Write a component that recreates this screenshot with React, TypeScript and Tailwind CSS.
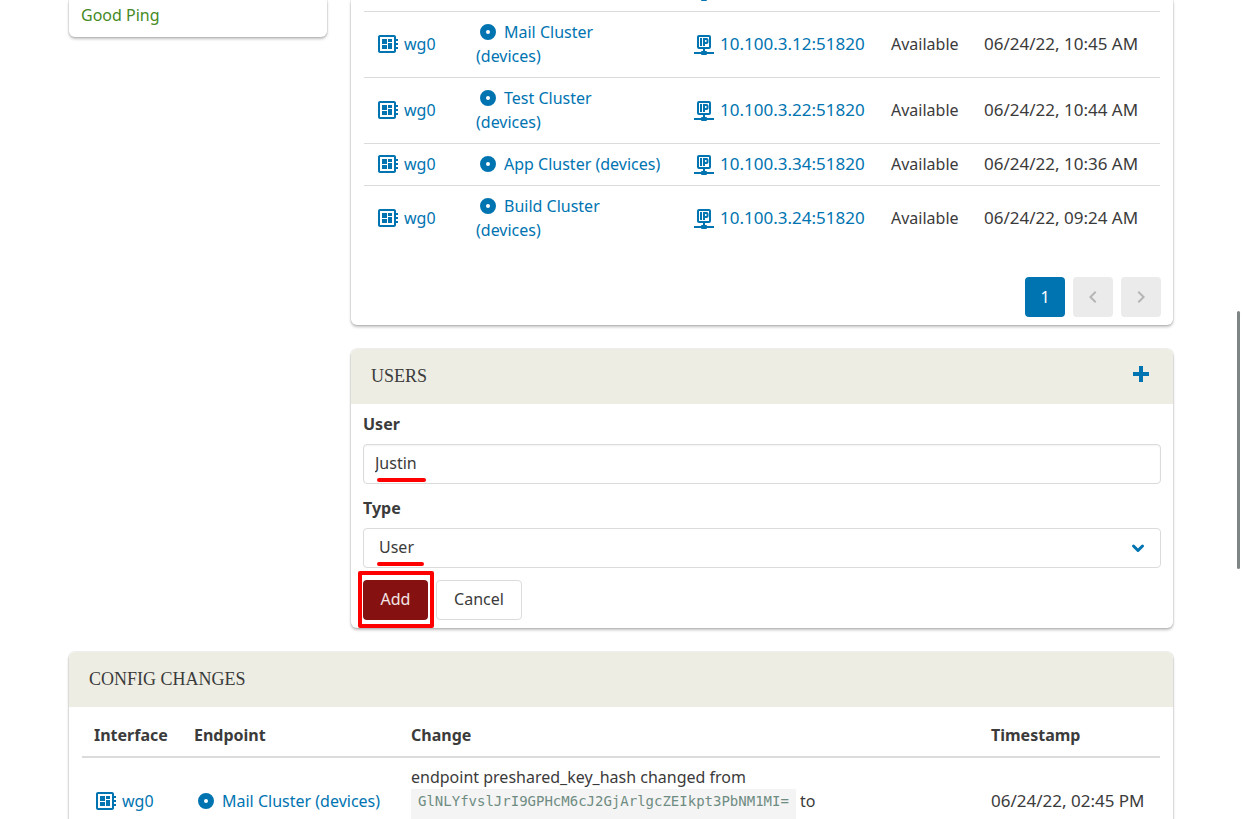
import React from "react";
import { MdDeveloperBoard, MdChevronLeft, MdChevronRight } from "react-icons/md";

const CARD =
  "bg-white shadow-[0_2px_3px_rgba(0,0,0,0.25),0_0_0_1px_rgba(0,0,0,0.06)]";
const LINK = "text-[#0074b1]";

type Peer = { cluster: string; address: string; time: string; stacked: boolean };

const peers: Peer[] = [
  { cluster: "Mail Cluster", address: "10.100.3.12:51820", time: "06/24/22, 10:45 AM", stacked: true },
  { cluster: "Test Cluster", address: "10.100.3.22:51820", time: "06/24/22, 10:44 AM", stacked: true },
  { cluster: "App Cluster", address: "10.100.3.34:51820", time: "06/24/22, 10:36 AM", stacked: false },
  { cluster: "Build Cluster", address: "10.100.3.24:51820", time: "06/24/22, 09:24 AM", stacked: true },
];

function IpIcon() {
  return (
    <svg viewBox="0 0 24 24" className="size-6 shrink-0" fill="currentColor" aria-hidden="true">
      <path d="M15 20a1 1 0 0 0-1-1h-1v-2h4a2 2 0 0 0 2-2V5a2 2 0 0 0-2-2H7a2 2 0 0 0-2 2v10a2 2 0 0 0 2 2h4v2h-1a1 1 0 0 0-1 1H2v2h7a1 1 0 0 0 1 1h4a1 1 0 0 0 1-1h7v-2h-7M7 15V5h10v10H7m1-9h2v8H8V6m6.500 0H11v8h2v-2h1.500c1.110 0 2-.89 2-2V8c0-1.110-.89-2-2-2m0 4H13V8h1.500v2z" />
    </svg>
  );
}

function InterfaceLink() {
  return (
    <a href="#interface" className={`flex items-center gap-1 ${LINK}`}>
      <MdDeveloperBoard className="size-6 shrink-0" aria-hidden="true" />
      <span>wg0</span>
    </a>
  );
}

function EndpointLink({ name, stacked = false }: { name: string; stacked?: boolean }) {
  return (
    <a href="#endpoint" className={LINK}>
      <svg viewBox="0 0 24 24" className="mr-1 inline-block size-6 align-top" fill="currentColor" aria-hidden="true">
        <path fillRule="evenodd" d="M12 4a8 8 0 1 0 0 16 8 8 0 0 0 0-16m0 6a2 2 0 1 1 0 4 2 2 0 0 1 0-4z" />
      </svg>
      <span className="whitespace-nowrap">{name}</span> {stacked && <br />}
      <span className="whitespace-nowrap">(devices)</span>
    </a>
  );
}

function CardHeader({ title, children }: { title: string; children?: React.ReactNode }) {
  return (
    <header className="flex items-start justify-between rounded-t-md bg-[#edede3] px-5 pt-[13px] pb-[14px]">
      <h2 className="font-['Liberation_Serif',serif] text-lg leading-7">{title}</h2>
      {children}
    </header>
  );
}

function PeersCard() {
  const cell = "px-3 pt-2 pb-[9px] align-middle";
  return (
    <section className={`${CARD} rounded-b-md pb-2`}>
      <div className="px-[13px]">
        <table className="w-full table-fixed border-collapse text-left">
          <colgroup>
            <col className="w-[100px]" />
            <col className="w-[216px]" />
            <col className="w-[199px]" />
            <col className="w-[93px]" />
            <col />
          </colgroup>
          <tbody>
            <tr>
              <td colSpan={2} />
              <td className="px-3 pb-[9px]">
                <span className={`flex h-0.5 items-end overflow-hidden ${LINK}`}>
                  <IpIcon />
                </span>
              </td>
              <td colSpan={2} />
            </tr>
            {peers.map((p) => (
              <tr key={p.address} className="border-t border-[#dbdbdb]">
                <td className={cell}>
                  <InterfaceLink />
                </td>
                <td className={cell}>
                  <EndpointLink name={p.cluster} stacked={p.stacked} />
                </td>
                <td className={cell}>
                  <a href="#address" className={`flex items-center gap-1 ${LINK}`}>
                    <IpIcon />
                    <span className="text-[17px]">{p.address}</span>
                  </a>
                </td>
                <td className={cell}>Available</td>
                <td className={`${cell} text-[17px] whitespace-nowrap`}>{p.time}</td>
              </tr>
            ))}
          </tbody>
        </table>
      </div>
      <nav aria-label="Pagination" className="mt-[26px] flex justify-end gap-2 px-3">
        <button type="button" className="size-10 rounded bg-[#0074b1] text-white">
          1
        </button>
        <button type="button" disabled aria-label="Previous page" className="flex size-10 items-center justify-center rounded bg-[#ebebeb] text-[#b5b5b5]">
          <MdChevronLeft className="size-6" />
        </button>
        <button type="button" disabled aria-label="Next page" className="flex size-10 items-center justify-center rounded bg-[#ebebeb] text-[#b5b5b5]">
          <MdChevronRight className="size-6" />
        </button>
      </nav>
    </section>
  );
}

function UsersCard() {
  return (
    <section className={`${CARD} rounded-md`}>
      <CardHeader title="USERS">
        <button type="button" aria-label="Add user" className={LINK}>
          <svg viewBox="0 0 24 24" className="size-6" fill="currentColor" aria-hidden="true">
            <path d="M20 14h-6v6h-4v-6H4v-4h6V4h4v6h6v4z" />
          </svg>
        </button>
      </CardHeader>
      <form className="px-3 py-2" onSubmit={(e) => e.preventDefault()}>
        <label htmlFor="user" className="mb-2 block font-bold">
          User
        </label>
        <div className="relative">
          <input
            id="user"
            type="text"
            defaultValue="Justin"
            className="block h-10 w-full rounded border border-[#dbdbdb] bg-white px-[11px] pb-0.5 shadow-[inset_0_1px_2px_rgba(0,0,0,0.05)]"
          />
          <span className="absolute bottom-[2px] left-[14px] h-1 w-[49px] rounded-full bg-[#ff0000]" />
        </div>
        <label htmlFor="type" className="mt-3 mb-2 block font-bold">
          Type
        </label>
        <div className="relative">
          <select
            id="type"
            defaultValue="User"
            className="block h-10 w-full appearance-none rounded border border-[#dbdbdb] bg-white px-[15px] pb-0.5"
          >
            <option>User</option>
          </select>
          <svg viewBox="0 0 14 10" className="pointer-events-none absolute top-[15px] right-4 h-[10px] w-[14px] text-[#0074b1]" fill="none" stroke="currentColor" strokeWidth="3" strokeLinecap="round" strokeLinejoin="round" aria-hidden="true">
            <path d="M2.500 3 7 7.500 11.500 3" />
          </svg>
          <span className="absolute bottom-[2px] left-[14px] h-1 w-[47px] rounded-full bg-[#ff0000]" />
        </div>
        <div className="mt-3 flex gap-2">
          <div className="relative">
            <button type="submit" className="block h-10 w-[65px] rounded bg-[#851111] pb-0.5 text-white/90">
              Add
            </button>
            <span className="pointer-events-none absolute -top-[9px] -right-[6px] -bottom-2 -left-[5px] rounded-xs border-4 border-[#ff0000]" />
          </div>
          <button type="button" className="h-10 w-[86px] rounded border border-[#dbdbdb] bg-white pb-0.5">
            Cancel
          </button>
        </div>
      </form>
    </section>
  );
}

function ConfigChangesCard() {
  const head = "px-3 pt-2 pb-[9px] font-bold";
  const cell = "px-3 pt-[7px] pb-2 align-middle";
  return (
    <section className={`${CARD} rounded-md pb-3`}>
      <CardHeader title="CONFIG CHANGES" />
      <div className="px-[13px] pt-2">
        <table className="w-full table-fixed border-separate border-spacing-0 text-left">
          <colgroup>
            <col className="w-[100px]" />
            <col className="w-[217px]" />
            <col />
            <col className="w-[181px]" />
          </colgroup>
          <thead>
            <tr>
              {["Interface", "Endpoint", "Change", "Timestamp"].map((h) => (
                <th key={h} className={`${head} border-b-2 border-[#dbdbdb]`}>
                  {h}
                </th>
              ))}
            </tr>
          </thead>
          <tbody>
            <tr>
              <td className={cell}>
                <InterfaceLink />
              </td>
              <td className={cell}>
                <EndpointLink name="Mail Cluster" />
              </td>
              <td className={cell}>
                <div>endpoint preshared_key_hash changed from</div>
                <div className="flex gap-1">
                  <code className="bg-[#f4f4f4] px-[7px] font-['DejaVu_Sans_Mono',monospace] text-sm leading-6 text-[#6f8c82]">
                    GlNLYfvslJrI9GPHcM6cJ2GjArlgcZEIkpt3PbNM1MI=
                  </code>
                  <span>to</span>
                </div>
                <div className="h-6 w-[385px] bg-[#f4f4f4]" />
              </td>
              <td className={`${cell} text-[17px] whitespace-nowrap`}>06/24/22, 02:45 PM</td>
            </tr>
          </tbody>
        </table>
      </div>
    </section>
  );
}

export default function App() {
  return (
    <div className="relative h-screen overflow-hidden bg-white font-['Noto_Sans',sans-serif] text-base leading-6 text-[#3b3b3b]">
      <main className="flex flex-col gap-6 px-[69px]">
        <div className="grid grid-cols-4 items-start gap-6">
          <aside className={`${CARD} rounded-b-md px-3 pt-[3px] pb-[10px] text-[#468a1f]`}>
            Good Ping
          </aside>
          <div className="col-span-3 flex flex-col gap-6">
            <PeersCard />
            <UsersCard />
          </div>
        </div>
        <ConfigChangesCard />
      </main>
      <div className="absolute top-[311px] right-0.5 h-[258px] w-[3px] rounded-full bg-[#7f8585]" />
    </div>
  );
}
